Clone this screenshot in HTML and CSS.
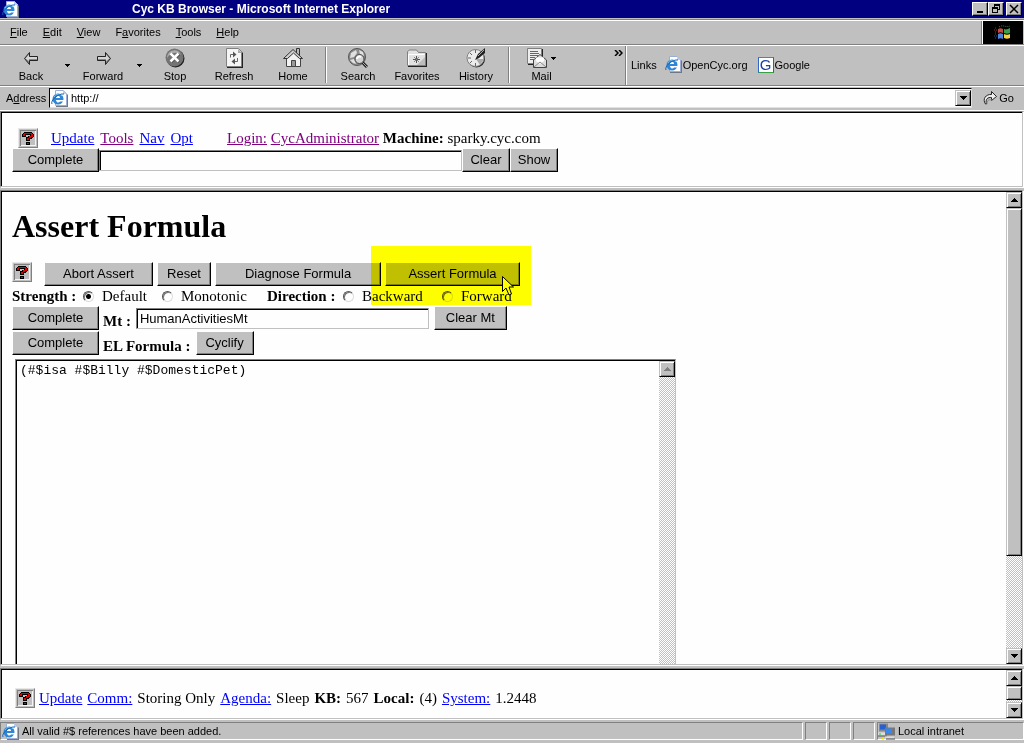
FILE: index.html
```html
<!DOCTYPE html>
<html lang="en">
<head>
<meta charset="utf-8">
<title>Cyc KB Browser - Microsoft Internet Explorer</title>
<link rel="stylesheet" href="styles.css">
</head>
<body>
<svg class="defs" aria-hidden="true">
  <symbol id="help" viewBox="0 0 20 20">
    <path fill="#e8e8e8" d="M0 0h20v20H0z"/><path fill="#808080" d="M20 0v20H0l1-1h18V1z"/>
    <path fill="#c0c0c0" d="M1 1h18v18H1z"/><path fill="#808080" d="M2 2h16v1H3v15H2z"/><path fill="#f4f4f4" d="M17 3h1v15H3v-1h14z"/>
    <g shape-rendering="crispEdges"><path d="M6 4h8v1h1v1h1v3h-1v1h-1v1h-2v2H8V9h2V8h2V7H8v2H4V6h1V5h1zM8 14h4v3H8z"/><path fill="#e00000" d="M6 5h8v1h1v3h-2v1h-2v2H9v-2h2V8h2V6H7v2H5V6h1zM9 15h2v1H9z"/></g>
  </symbol>
  <symbol id="ie" viewBox="0 0 17 17">
    <path fill="#6f7684" d="M5 2h9l3 3v12H5z"/><path fill="#fff" stroke="#9caed8" d="M4.500.5h8l3 3v12h-11z"/><path fill="#b9cdf2" d="M12 0v4h4z"/>
    <circle cx="7" cy="9" r="5.500" fill="#2f86d6"/><path fill="#fff" d="M5 8c0-3 4-3 4 0zM5 10h8v1.500H9c-1 2-4 1-4-1.500z"/>
    <path fill="none" stroke="#7cc8f5" d="M3 7c1-3 6-4 8-1"/>
    <path fill="none" stroke="#1464b4" d="M1 14c-2-3 6-11 12-10"/>
  </symbol>
  <symbol id="up" viewBox="0 0 7 4"><path shape-rendering="crispEdges" d="M3 0h1v1h1v1h1v1h1v1H0V3h1V2h1V1h1z"/></symbol>
  <symbol id="down" viewBox="0 0 7 4"><path shape-rendering="crispEdges" d="M0 0h7v1H6v1H5v1H4v1H3V3H2V2H1V1H0z"/></symbol>
  <symbol id="small-down" viewBox="0 0 5 3"><path shape-rendering="crispEdges" d="M0 0h5v1H4v1H3v1H2V2H1V1H0z"/></symbol>
  <symbol id="back" viewBox="0 0 20 20"><path fill="#888" stroke="#222" d="M3.500 10.500l5-6v4h8v4h-8v4z"/><path fill="#d5d5d5" d="M4.500 10.500L8 6.500V9h8v2H8v2z"/></symbol>
  <symbol id="forward" viewBox="0 0 20 20"><path fill="#888" stroke="#222" d="M17.500 10.500l-5-6v4h-8v4h8v4z"/><path fill="#d5d5d5" d="M16.500 10.500L13 6.500V9H5v2h8v2z"/></symbol>
  <symbol id="stop" viewBox="0 0 20 20"><circle cx="10.500" cy="10.500" r="9" fill="#222"/><circle cx="9.500" cy="9.500" r="9" fill="#747474"/><path fill="#ababab" d="M2 10c0-8 11-11 14-3C12 3 5 5 2 10"/><path stroke="#444" stroke-width="3" d="M6 6l8 8m0-8l-8 8"/><path stroke="#fff" stroke-width="2.500" d="M5.500 5.500l8 8m0-8l-8 8"/></symbol>
  <symbol id="refresh" viewBox="0 0 20 20"><path fill="#222" d="M3 1h12l4 4v15H3z"/><path fill="#f5f5f5" stroke="#808080" d="M2.500.5h12l3 3v15h-15z"/><path fill="#aaa" d="M14 1v4h4z"/><path fill="none" stroke="#666" d="M6.500 9.500v-3h4M13.500 10v3.500h-4"/><path fill="#555" d="M9 3.500l3.500 3-3.500 3zM11 10.500l-3.500 3 3.500 3z"/></symbol>
  <symbol id="home" viewBox="0 0 20 20"><path fill="#bbb" stroke="#333" d="M13.500 7V.5h3V10"/><path fill="#f2f2f2" stroke="#444" d="M3.500 10v8.500h14V10l-7-7z"/><path fill="#d0d0d0" stroke="#333" d="M.5 10.500l9.500-9 9.500 9h-3L10.500 5l-6 5.500z"/><path fill="#999" stroke="#444" d="M8.500 12.500h4v6h-4z"/></symbol>
  <symbol id="search" viewBox="0 0 20 20"><circle cx="9" cy="9" r="8.500" fill="#8d8d8d" stroke="#555"/><path fill="#e0e0e0" d="M3 5l5-3 1 3-3 4-4 1zM11 2l4 2 1 4-4-2zM2 12l4-1 2 5-3-1z"/><path stroke="#222" stroke-width="3" d="M14 14l5 5"/><path stroke="#aaa" d="M14 14l5 5"/><circle cx="11.500" cy="11" r="4.500" fill="#d4d4d4" stroke="#444"/><path stroke="#fff" fill="none" stroke-width="2" d="M9 11c0-2 2-3 4-2"/></symbol>
  <symbol id="favorites" viewBox="0 0 20 20"><path fill="#222" d="M1 5h19v14H1z"/><path fill="#e2e2e2" stroke="#808080" d="M.5 17.500v-14l2-1.500h7l2 2.500h7v13z"/><path fill="#bdbdbd" d="M10 17l8-8v8z"/><path fill="none" stroke="#fff" d="M1.500 17V6.500h16"/><path stroke="#555" d="M9.500 8v7M6 11.500h7"/><path stroke="#888" d="M7 9l5 5M12 9l-5 5"/></symbol>
  <symbol id="history" viewBox="0 0 20 20"><circle cx="10.500" cy="11" r="8.500" fill="#222"/><circle cx="9.500" cy="10" r="8.500" fill="#ececec" stroke="#808080"/><path stroke="#666" d="M9.500 2v3M9.500 15v3M2 10h3M4 5l2 2M4 15l2-2M13 13l2 2"/><path fill="#aaa" d="M10 11h8l-4 6z"/><path fill="#222" d="M9 12l3-6 7-6v5l-6 5z"/><path stroke="#aaa" d="M12 8l6-6"/></symbol>
  <symbol id="mail" viewBox="0 0 20 20"><path fill="#222" d="M1 1h15v16H1z"/><path fill="#eee" stroke="#808080" d="M.5.5h14v15H.5z"/><path stroke="#666" d="M3 3.500h8M3 5.500h9M3 7.500h8M3 9.500h5M3 11.500h4"/><path fill="#ddd" stroke="#444" d="M6.500 19.500V12l6.500-5.500 6.500 5.500v7.500z"/><path fill="#fff" d="M9 13V9.500h8V13l-4 3z"/><path fill="none" stroke="#888" d="M7 19l6-5 6 5"/></symbol>
  <symbol id="flag" viewBox="0 0 18 18"><path fill="#c74a3f" d="M4 5c2-1 3-1 5 0v4c-2-1-3-1-5 0z"/><path fill="#38a04c" d="M10 5c2 1 4 0 6-1v5c-2 1-4 1-6 0z"/><path fill="#4a86dd" d="M4 10c2-1 3-1 5 0v5c-2-1-3-1-5 0z"/><path fill="#f5d33c" d="M10 10c2 1 4 1 6 0v4c-2 1-4 1-6 0z"/><path fill="none" stroke="#8f342d" stroke-dasharray="1 1" d="M1 4h2M0 6h3M1 8h2"/><path fill="none" stroke="#2c4e89" stroke-dasharray="1 1" d="M1 10h2M0 12h3M1 14h2"/><path fill="none" stroke="#377a40" stroke-dasharray="1 1" d="M5 3c4-3 7 1 11-1"/></symbol>
  <symbol id="go" viewBox="0 0 16 16"><path fill="#eee" stroke="#222" d="M3.500 14C0 9 4 4 9.500 4.500v-3l5 5-5 4v-3C6 7 3 9 4.500 14z"/><path stroke="#888" fill="none" d="M5 14c0-3 1-5 5-4"/></symbol>
  <symbol id="network" viewBox="0 0 17 16"><path fill="#888" d="M1 0h9v8H1z"/><path fill="#2760d4" d="M2 1h6v5H2z"/><path fill="#ddd" d="M0 9h8v3H0z"/><path fill="#555" d="M0 12h9v1H0z"/><path fill="#777" d="M7 4h10v8H7z"/><path fill="#3988ef" d="M8 5h6v5H8z"/><path fill="#ddd" d="M7 13h9v2H7z"/><path fill="#444" d="M8 15h9v1H8z"/><path fill="#fd0" d="M4 14h2v2H4z"/><path fill="#0d4" d="M1 10h2v1H1z"/></symbol>
</svg>

<header class="title-bar">
  <svg class="ie-icon"><use href="#ie"/></svg>
  <span class="title-text">Cyc KB Browser - Microsoft Internet Explorer</span>
  <div class="window-buttons">
    <button class="bevel" aria-label="Minimize"><svg viewBox="0 0 12 10"><path d="M3 7h6v2H3z"/></svg></button>
    <button class="bevel" aria-label="Restore"><svg viewBox="0 0 12 10" shape-rendering="crispEdges"><path d="M4 0h6v6H8V5h1V2H5v1H4zM2 3h6v6H2zM3 5v3h4V5z" fill-rule="evenodd"/></svg></button>
    <button class="bevel close" aria-label="Close"><svg viewBox="0 0 12 10"><path stroke="#000" stroke-width="1.500" d="M2 1l8 8m0-8L2 9"/></svg></button>
  </div>
</header>

<div class="menu-bar">
  <nav class="menus"><button><u>F</u>ile</button><button><u>E</u>dit</button><button><u>V</u>iew</button><button>F<u>a</u>vorites</button><button><u>T</u>ools</button><button><u>H</u>elp</button></nav>
  <div class="brand"><svg><use href="#flag"/></svg></div>
</div>

<div class="tool-row">
  <div class="tools">
    <button class="tool"><svg><use href="#back"/></svg>Back</button>
    <button class="arrow" aria-label="Back history"><svg><use href="#small-down"/></svg></button>
    <button class="tool"><svg><use href="#forward"/></svg>Forward</button>
    <button class="arrow" aria-label="Forward history"><svg><use href="#small-down"/></svg></button>
    <button class="tool"><svg><use href="#stop"/></svg>Stop</button>
    <button class="tool wide"><svg><use href="#refresh"/></svg>Refresh</button>
    <button class="tool"><svg><use href="#home"/></svg>Home</button>
    <span class="separator"></span>
    <button class="tool"><svg><use href="#search"/></svg>Search</button>
    <button class="tool wide"><svg><use href="#favorites"/></svg>Favorites</button>
    <button class="tool"><svg><use href="#history"/></svg>History</button>
    <span class="separator"></span>
    <button class="tool mail"><span class="mail-icon"><svg><use href="#mail"/></svg><svg class="mail-arrow"><use href="#small-down"/></svg></span>Mail</button>
    <button class="more" aria-label="More tools"><svg viewBox="0 0 9 6"><path fill="none" stroke="#000" stroke-width="1.500" d="M1 0l3 3-3 3M5 0l3 3-3 3"/></svg></button>
  </div>
  <nav class="links">
    <span>Links</span>
    <a href="#"><svg class="ie-icon"><use href="#ie"/></svg>OpenCyc.org</a>
    <a href="#"><span class="google">G</span>Google</a>
  </nav>
</div>

<div class="address-bar">
  <label for="url">A<u>d</u>dress</label>
  <div class="address-box">
    <svg class="ie-icon"><use href="#ie"/></svg>
    <input id="url" type="text" value="http://">
    <button class="bevel sb-button" aria-label="Show addresses"><svg><use href="#down"/></svg></button>
  </div>
  <button class="go"><svg><use href="#go"/></svg>Go</button>
</div>

<section class="frame top-frame">
  <div class="frame-body">
    <div class="info">
      <svg class="help"><use href="#help"/></svg>
      <nav class="info-links"><a href="#">Update</a> <a class="visited" href="#">Tools</a> <a href="#">Nav</a> <a href="#">Opt</a></nav>
      <p><a class="visited" href="#">Login:</a> <a class="visited" href="#">CycAdministrator</a> <b>Machine:</b> sparky.cyc.com</p>
    </div>
    <div class="complete-row">
      <button class="btn complete">Complete</button><input class="field search" type="text" aria-label="Search term"><button class="btn clear">Clear</button><button class="btn clear">Show</button>
    </div>
  </div>
</section>

<main class="frame main-frame">
  <div class="frame-body">
    <h1>Assert Formula</h1>
    <div class="actions">
      <svg class="help"><use href="#help"/></svg>
      <button class="btn abort">Abort Assert</button>
      <button class="btn reset">Reset</button>
      <button class="btn diagnose">Diagnose Formula</button>
      <div class="spot">
        <button class="btn assert">Assert Formula</button>
        <span class="highlight"></span>
        <svg class="cursor" viewBox="0 0 12 20"><path fill="#ff0" stroke="#000" d="M.5.5v15L4 12l3 7 2.500-1L7 11h4.500z"/></svg>
      </div>
    </div>
    <div class="options">
      <b>Strength :</b>
      <label><input type="radio" name="strength" checked>Default</label>
      <label><input type="radio" name="strength">Monotonic</label>
      <b>Direction :</b>
      <label><input type="radio" name="direction">Backward</label>
      <label><input type="radio" name="direction">Forward</label>
    </div>
    <div class="form-row"><button class="btn complete">Complete</button><label for="mt">Mt :</label><input class="field mt" id="mt" type="text" value="HumanActivitiesMt"><button class="btn clear-mt">Clear Mt</button></div>
    <div class="form-row"><button class="btn complete">Complete</button><label for="formula">EL Formula :</label><button class="btn cyclify">Cyclify</button></div>
    <div class="formula-box">
      <textarea id="formula" spellcheck="false">(#$isa #$Billy #$DomesticPet)</textarea>
      <div class="scrollbar"><button class="bevel sb-button off" aria-label="Scroll formula up"><svg><use href="#up"/></svg></button></div>
    </div>
  </div>
  <div class="scrollbar">
    <button class="bevel sb-button" aria-label="Scroll up"><svg><use href="#up"/></svg></button>
    <div class="track"><div class="bevel thumb"></div></div>
    <button class="bevel sb-button" aria-label="Scroll down"><svg><use href="#down"/></svg></button>
  </div>
</main>

<section class="frame bottom-frame">
  <div class="frame-body">
    <svg class="help"><use href="#help"/></svg>
    <div class="stats"><a href="#">Update</a><a href="#">Comm:</a><span>Storing Only</span><a href="#">Agenda:</a><span>Sleep</span><b>KB:</b><span>567</span><b>Local:</b><span>(4)</span><a href="#">System:</a><span>1.2448</span></div>
  </div>
  <div class="scrollbar">
    <button class="bevel sb-button" aria-label="Scroll up"><svg><use href="#up"/></svg></button>
    <div class="track"><div class="bevel thumb"></div></div>
    <button class="bevel sb-button" aria-label="Scroll down"><svg><use href="#down"/></svg></button>
  </div>
</section>

<footer class="status-bar">
  <div class="cell message"><svg class="ie-icon"><use href="#ie"/></svg>All valid #$ references have been added.</div>
  <div class="cell blank"></div><div class="cell blank"></div><div class="cell blank"></div>
  <div class="cell zone"><svg class="ie-icon"><use href="#network"/></svg>Local intranet</div>
</footer>
</body>
</html>
```

FILE: styles.css
```css
* { box-sizing: border-box; }
body {
  display: flex;
  flex-direction: column;
  height: 100vh;
  margin: 0;
  overflow: hidden;
  background: #c0c0c0;
  color: #000;
  font: 11px/16px "Liberation Sans", Arial, sans-serif;
}
button, input, textarea {
  margin: 0;
  padding: 0;
  border: 0;
  border-radius: 0;
  background: none;
  color: inherit;
  font: inherit;
  outline: 0;
}
p, h1 { margin: 0; }
svg { display: block; flex: none; }
.defs { position: absolute; width: 0; height: 0; }
.ie-icon { width: 17px; height: 17px; }
.help { width: 20px; height: 20px; }

.bevel {
  background: #c0c0c0;
  border: 1px solid;
  border-color: #c0c0c0 #000 #000 #c0c0c0;
  box-shadow: inset 1px 1px #fff, inset -1px -1px #808080;
}

/* Window chrome */
.title-bar {
  display: flex;
  align-items: center;
  flex: none;
  height: 18px;
  padding: 0 2px;
  background: #000080;
  color: #fff;
}
.title-text { flex: 1; padding-left: 113px; font-size: 12px; font-weight: bold; }
.window-buttons { display: flex; }
.window-buttons button { width: 16px; height: 14px; border-color: #fff #000 #000 #fff; box-shadow: inset -1px -1px #808080; }
.window-buttons svg { width: 12px; height: 10px; margin: 1px; }
.window-buttons .close { margin-left: 2px; }

.menu-bar {
  display: flex;
  flex: none;
  height: 27px;
  margin-top: 1px;
  border-top: 1px solid #808080;
  border-bottom: 1px solid #fff;
  box-shadow: inset 0 1px #fff, inset 0 -1px #808080;
}
.menus { display: flex; flex: 1; align-items: center; gap: 15px; padding: 0 0 2px 10px; }
.brand {
  display: flex;
  align-items: center;
  justify-content: center;
  width: 40px;
  margin: 1px 1px 1px 0;
  background: #000;
  box-shadow: -1px 0 #fff, -2px 0 #808080;
}
.brand svg { width: 18px; height: 18px; }

.tool-row { display: flex; flex: none; height: 40px; border-bottom: 1px solid #808080; box-shadow: 0 1px #fff; }
.tools { display: flex; width: 626px; padding-left: 3px; border-right: 1px solid #808080; }
.tool { display: flex; flex-direction: column; align-items: center; gap: 1px; width: 56px; padding-top: 2px; line-height: 14px; }
.tool svg { width: 20px; height: 20px; }
.wide { width: 62px; }
.arrow { display: flex; align-items: center; justify-content: center; width: 16px; }
.arrow svg, .tool .mail-arrow { width: 5px; height: 3px; }
.separator { width: 1px; margin: 1px 4px 2px; background: #808080; box-shadow: 1px 0 #fff; }
.mail-icon { display: flex; align-items: center; gap: 4px; }
.mail { padding-left: 1px; }
.more { align-self: flex-start; margin: 4px 2px 0 auto; }
.more svg { width: 9px; height: 6px; }
.links { display: flex; flex: 1; align-items: center; gap: 8px; padding: 0 0 2px 4px; border-left: 1px solid #fff; }
.links a { display: flex; align-items: center; gap: 1px; margin-right: 2px; color: #000; text-decoration: none; }
.google {
  width: 16px;
  height: 16px;
  border: 1px solid;
  border-color: #38a048 #d22 #38a048 #36c;
  background: #fff;
  color: #1a3fa8;
  font-size: 15px;
  line-height: 14px;
  text-align: center;
}

.address-bar { display: flex; flex: none; align-items: center; height: 25px; padding: 2px 10px 2px 6px; border-bottom: 1px solid #fff; }
.address-bar label { width: 43px; }
.address-box {
  display: flex;
  flex: 1;
  align-items: center;
  height: 20px;
  padding: 0 0 0 1px;
  border: 1px solid;
  border-color: #000 #e0e0e0 #e0e0e0 #000;
  background: #fefefe;
}
.address-box input { flex: 1; min-width: 0; padding-left: 3px; }
.go { display: flex; align-items: center; gap: 1px; margin-left: 10px; }
.go svg { width: 16px; height: 16px; }

/* Frames */
.frame {
  display: flex;
  flex: none;
  min-height: 0;
  margin-right: 1px;
  border: 1px solid;
  border-color: #808080 #c0c0c0 #c0c0c0 #808080;
  background: #fefefe;
  box-shadow: 1px 1px #fff;
  font: 15px/18px "Liberation Serif", "Times New Roman", serif;
}
.frame-body { flex: 1; min-width: 0; border-top: 1px solid #000; border-left: 1px solid #000; }
.frame a { color: #00f; }
.frame .visited { color: #800080; }
.top-frame { height: 76px; }
.top-frame .frame-body { padding: 15px 10px; }
.info { display: flex; align-items: center; height: 20px; padding-left: 6px; }
.info-links { display: flex; gap: 6px; width: 176px; margin-left: 13px; }
.complete-row { display: flex; align-items: center; }

.btn {
  flex: none;
  height: 24px;
  border: 1px solid;
  border-color: #fff #000 #000 #fff;
  background: #c0c0c0;
  box-shadow: inset -1px -1px #808080;
  font: 13px/18px "Liberation Sans", Arial, sans-serif;
}
.complete { width: 87px; }
.clear { width: 48px; }
.abort { width: 109px; }
.reset { width: 54px; }
.diagnose { width: 166px; }
.assert { width: 135px; }
.clear-mt { width: 73px; }
.cyclify { width: 58px; }
.field {
  height: 21px;
  padding-left: 3px;
  border: 1px solid;
  border-color: #808080 #c0c0c0 #c0c0c0 #808080;
  background: #fefefe;
  box-shadow: inset 1px 1px #000;
  font: 13px/16px "Liberation Sans", Arial, sans-serif;
}
.search { width: 363px; }

.main-frame { flex: 1 1 0; margin-top: 3px; }
.main-frame .frame-body { display: flex; flex-direction: column; padding-left: 10px; overflow: hidden; }
h1 { padding: 16px 0 17px; font-size: 32px; line-height: 36px; }
.actions { display: flex; flex: none; gap: 4px; align-items: flex-start; padding-top: 1px; }
.actions .help { margin-right: 8px; }
.spot { position: relative; }
.highlight { position: absolute; top: -16px; left: -14px; width: 160px; height: 59px; background: #ff0; mix-blend-mode: multiply; pointer-events: none; }
.cursor { position: absolute; top: 14px; left: 117px; width: 12px; height: 20px; }
.options { display: grid; flex: none; grid-template-columns: 71px 79px 105px 76px 99px auto; align-items: center; height: 20px; }
.options label { display: flex; align-items: center; gap: 8px; }
input[type="radio"] {
  appearance: none;
  width: 11px;
  height: 11px;
  border: 1px solid;
  border-color: #555 #ddd #ddd #555;
  border-radius: 50%;
  background: #fff;
  box-shadow: inset 1px 1px #777;
}
input[type="radio"]:checked { background: radial-gradient(circle, #000 2px, #fff 3px); }
.form-row { display: flex; flex: none; align-items: flex-start; height: 25px; }
.form-row label { margin: 6px 5px 0 4px; font-weight: bold; }
.mt { width: 293px; margin: 2px 5px 0 0; }
.formula-box {
  display: flex;
  flex: 1;
  width: 661px;
  min-height: 0;
  margin: 3px 0 0 3px;
  border: 1px solid;
  border-color: #808080 #c0c0c0 #fff #808080;
  border-bottom: 0;
}
.formula-box textarea {
  flex: 1;
  padding: 2px 3px;
  border-top: 1px solid #000;
  border-left: 1px solid #000;
  background: #fefefe;
  font: 13px/16px "Liberation Mono", "Courier New", monospace;
  resize: none;
}

.scrollbar {
  display: flex;
  flex: none;
  flex-direction: column;
  width: 16px;
  border-top: 1px solid #000;
  background: repeating-conic-gradient(#c0c0c0 0 25%, #fff 0 50%) 0 0 / 2px 2px;
}
.sb-button { display: flex; flex: none; align-items: center; justify-content: center; width: 16px; height: 16px; }
.sb-button svg { width: 7px; height: 4px; }
.off { fill: #808080; }
.track { flex: 1; min-height: 0; }
.main-frame .thumb { height: 79%; }
.bottom-frame .thumb { height: 14px; }

.bottom-frame { height: 51px; margin-top: 3px; }
.bottom-frame .frame-body { display: flex; align-items: center; gap: 4px; padding: 8px 13px 0; }
.stats { display: flex; gap: 5px; white-space: nowrap; }

/* Status bar */
.status-bar { display: flex; flex: none; gap: 2px; height: 25px; padding: 3px 0 4px; box-shadow: inset 0 -1px #fff; }
.cell { display: flex; align-items: center; gap: 3px; border: 1px solid; border-color: #808080 #fff #fff #808080; }
.message { flex: 1; padding-left: 1px; }
.blank { width: 22px; }
.zone { width: 147px; }
```
